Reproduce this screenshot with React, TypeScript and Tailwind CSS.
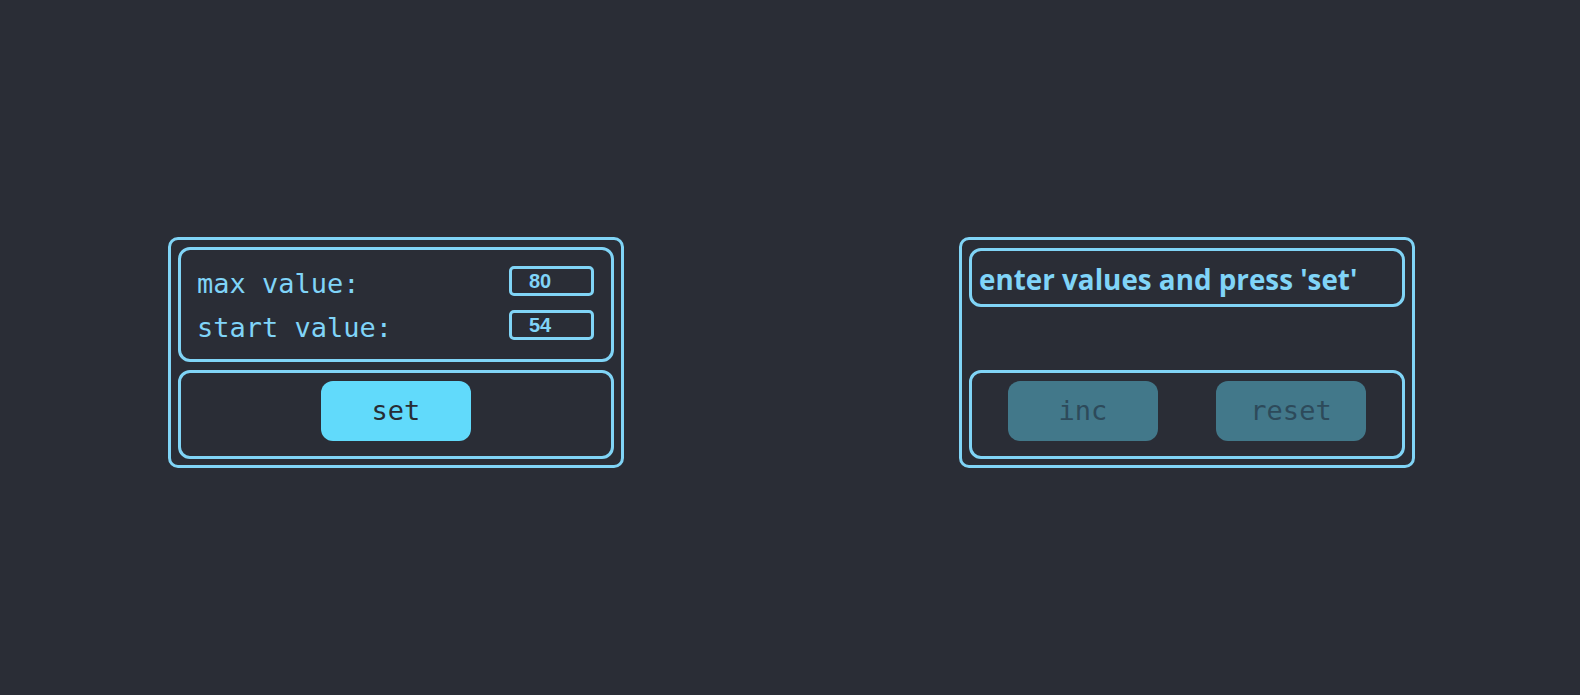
import React, { useState } from 'react';

const mono = "font-['DejaVu_Sans_Mono',monospace]";

function SettingsPanel({ max, start }: { max: number; start: number }) {
    return (
        <div className="w-[456px] h-[231px] border-[3px] border-[#80d4f6] rounded-[10px] px-[7px] pt-[7px] pb-[6px] flex flex-col gap-[8px]">
            {/* inputs */}
            <div className="border-[3px] border-[#80d4f6] rounded-[12px] pl-4 pr-[17px] pt-4 pb-[19px] flex flex-col gap-[14px]">
                <Row label="max value:" value={max} />
                <Row label="start value:" value={start} />
            </div>
            <div className="flex-1 border-[3px] border-[#80d4f6] rounded-[12px] pt-[8px] flex justify-center items-start">
                <button className={`w-[150px] h-[60px] rounded-[12px] bg-[#61dafb] text-[#282c34] text-[27px] ${mono}`}>set</button>
            </div>
        </div>
    );
}

function Row({ label, value }: { label: string; value: number }) {
    return (
        <div className="h-[30px] flex items-center justify-between">
            <span className={`text-[#80d4f8] text-[27px] leading-none pt-[5px] ${mono}`}>{label}</span>
            <div className="w-[85px] h-[30px] border-[3px] border-[#80d4f6] rounded-[5px] pl-[17px] flex items-center text-[#80d4f8] text-[20px] font-bold font-['Liberation_Sans',Arial,sans-serif]">
                {value}
            </div>
        </div>
    );
}

function CounterPanel() {
    return (
        <div className="w-[456px] h-[231px] border-[3px] border-[#80d4f6] rounded-[10px] px-[7px] pt-[8px] pb-[6px] flex flex-col justify-between">
            <div className="h-[59px] border-[3px] border-[#80d4f6] rounded-[12px] px-[7px] pt-[4px] flex items-center">
                <span className="text-[#80d4f8] text-[27.8px] font-bold font-['Open_Sans',sans-serif]">enter values and press 'set'</span>
            </div>
            <div className="h-[89px] border-[3px] border-[#80d4f6] rounded-[12px] px-[7px] pt-[8px] flex justify-around items-start">
                <button disabled className={`w-[150px] h-[60px] rounded-[12px] bg-[#42788a] text-[#2d4a5a] text-[27px] ${mono}`}>inc</button>
                <button disabled className={`w-[150px] h-[60px] rounded-[12px] bg-[#42788a] text-[#2d4a5a] text-[27px] ${mono}`}>reset</button>
            </div>
        </div>
    );
}

export default function App() {
    const [max] = useState(80);
    const [start] = useState(54);

    return (
        <div className="w-full h-[695px] bg-[#2a2d36] flex items-center gap-[335px] pl-[168px] pt-[10px]">
            <SettingsPanel max={max} start={start} />
            <CounterPanel />
        </div>
    );
}
